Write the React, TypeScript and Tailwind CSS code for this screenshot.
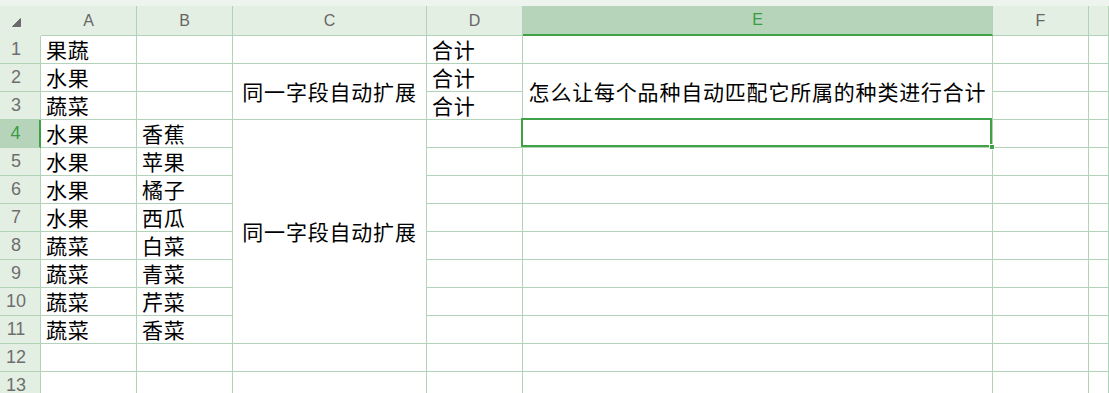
import React from "react";

const CJK = "font-['Noto_Sans_CJK_SC','Noto_Sans',sans-serif]";
const HDR = "font-['Liberation_Sans','Noto_Sans',sans-serif]";

type Cell = { t?: string; span?: number; center?: boolean; sel?: boolean };

const rows: Cell[][] = [
  [{ t: "果蔬" }, {}, {}, { t: "合计" }, {}, {}, {}],
  [{ t: "水果" }, {}, { t: "同一字段自动扩展", span: 2, center: true }, { t: "合计" }, { t: "怎么让每个品种自动匹配它所属的种类进行合计", span: 2, center: true }, {}, {}],
  [{ t: "蔬菜" }, {}, { t: "合计" }, {}, {}],
  [{ t: "水果" }, { t: "香蕉" }, { t: "同一字段自动扩展", span: 8, center: true }, {}, { sel: true }, {}, {}],
  [{ t: "水果" }, { t: "苹果" }, {}, {}, {}, {}],
  [{ t: "水果" }, { t: "橘子" }, {}, {}, {}, {}],
  [{ t: "水果" }, { t: "西瓜" }, {}, {}, {}, {}],
  [{ t: "蔬菜" }, { t: "白菜" }, {}, {}, {}, {}],
  [{ t: "蔬菜" }, { t: "青菜" }, {}, {}, {}, {}],
  [{ t: "蔬菜" }, { t: "芹菜" }, {}, {}, {}, {}],
  [{ t: "蔬菜" }, { t: "香菜" }, {}, {}, {}, {}],
  [{}, {}, {}, {}, {}, {}, {}],
  [{}, {}, {}, {}, {}, {}, {}],
];

const letters = ["A", "B", "C", "D", "E", "F", ""];

function spanClass(n?: number) {
  if (n === 2) return "row-span-2";
  if (n === 8) return "row-span-8";
  return "";
}

export default function App() {
  return (
    <div className="w-[1109px] h-[393px] overflow-hidden bg-white">
      <div className="h-[6px] bg-[#edf4ed]" />
      <div className="grid grid-cols-[41px_96px_96px_194px_96px_470px_96px_1fr] grid-rows-[30px_repeat(13,28px)]">
        {/* corner */}
        <div className="bg-[#e4efe4] flex items-end pl-[12px] pb-[9px]">
          <svg width="9" height="9" viewBox="0 0 9 9">
            <path d="M8.5 0.5 L8.5 8.5 L0.5 8.5 Z" fill="#6b6b6b" stroke="#6b6b6b" strokeWidth="1" strokeLinejoin="round" />
          </svg>
        </div>
        {letters.map((l, i) =>
          l === "E" ? (
            <div
              key={i}
              className={`${HDR} bg-[#b5d4ba] border-r border-[#b3d3b9] border-b-2 border-b-[#3fa246] flex items-center justify-center text-[16px] text-[#3a9b42]`}
            >
              {l}
            </div>
          ) : (
            <div
              key={i}
              className={`${HDR} bg-[#e4efe4] border-r border-b border-[#b3d3b9] flex items-center justify-center text-[16px] text-[#666666]`}
            >
              {l}
            </div>
          )
        )}
        {rows.map((r, ri) => (
          <React.Fragment key={ri}>
            {ri === 3 ? (
              <div className={`${HDR} bg-[#b5d4ba] border-b border-[#b3d3b9] border-r-2 border-r-[#3fa246] flex items-center justify-center pr-[8px] text-[18px] text-[#3a9b42]`}>
                {ri + 1}
              </div>
            ) : (
              <div className={`${HDR} bg-[#e4efe4] border-b border-r border-[#b3d3b9] flex items-center justify-center pr-[8px] text-[18px] text-[#6e6e6e]`}>
                {ri + 1}
              </div>
            )}
            {r.map((c, ci) => (
              <div
                key={ci}
                className={`${CJK} relative border-r border-b border-[#b3d3b9] flex items-center whitespace-nowrap text-[21px] tracking-[0.8px] text-black leading-none ${
                  c.center ? "justify-center" : "pl-[5px]"
                } ${spanClass(c.span)}`}
              >
                {c.t}
                {c.sel && (
                  <div className="absolute left-[-2px] top-[-2px] right-0 bottom-0 border-2 border-[#3fa246] z-10">
                    <div className="absolute right-[-5px] bottom-[-5px] w-[6px] h-[6px] bg-[#3fa246] border border-white" />
                  </div>
                )}
              </div>
            ))}
          </React.Fragment>
        ))}
      </div>
    </div>
  );
}
